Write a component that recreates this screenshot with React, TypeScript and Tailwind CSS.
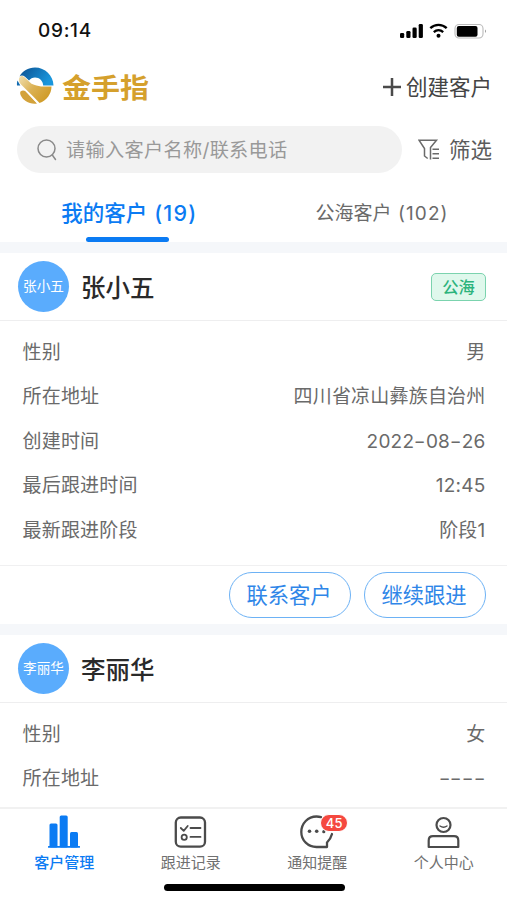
import React from "react";

function Logo() {
  return (
    <svg width="38" height="38" viewBox="0 0 38 38" className="shrink-0">
      <defs>
        <linearGradient id="blue" x1="0" y1="0" x2="1" y2="0.4">
          <stop offset="0" stopColor="#0b4f8f" />
          <stop offset="1" stopColor="#1a96dc" />
        </linearGradient>
        <linearGradient id="gold" x1="0" y1="0" x2="1" y2="0.7">
          <stop offset="0" stopColor="#f0dfb0" />
          <stop offset="0.5" stopColor="#dbb153" />
          <stop offset="1" stopColor="#cf9a25" />
        </linearGradient>
      </defs>
      <path d="M3.500 9.500C6.500 4 12 0.500 19 0.500C29 0.500 37.300 8.500 37.500 18.500H27.200C27 14 23.500 10.500 19 10.500C16.500 10.500 14.500 11.500 13 13.500L9 9.800C7 8 5 8 3.500 9.500Z" fill="url(#blue)" />
      <path d="M1.500 13.500L4.300 18.500H1C0.800 16.800 0.900 15 1.500 13.500Z" fill="#126bb0" />
      <path d="M3.500 10.500C5 8.300 7 8.800 9 10.800L15.500 16.800C19 18 22 19.300 25 19.500L35.500 19.500C35.500 27 30.500 33.500 23.500 36L17.500 29.800L5 17.500C2.800 15 2.300 12.500 3.500 10.500Z" fill="url(#gold)" />
      <path d="M4.500 24.500C7 22.800 9 23.500 11 25.800L21 36.500C14 37.800 7 33.500 4.800 28.500C4 26.800 4 25.500 4.500 24.500Z" fill="#d3a23a" />
      <path d="M10 23.800L22.500 36.800" stroke="#fff" strokeWidth="1.100" />
    </svg>
  );
}

function StatusBar() {
  return (
    <div className="flex h-[62px] shrink-0 items-center pl-[38px] pr-[20px]">
      <span className="pt-[1px] text-[19px] font-medium tracking-[0.700px] text-[#111]">09:14</span>
      <svg width="88" height="18" viewBox="0 0 88 18" className="ml-auto">
        <g fill="#000">
          <rect x="1" y="11" width="4.200" height="5" rx="1.300" />
          <rect x="7.300" y="9" width="4.200" height="7" rx="1.300" />
          <rect x="13.500" y="5.500" width="4.200" height="10.500" rx="1.300" />
          <rect x="19.700" y="2" width="4.200" height="14" rx="1.300" />
          <circle cx="39.500" cy="13.700" r="2" />
        </g>
        <path d="M31.300 6.200C36 1.800 43 1.800 47.700 6.200M34.800 10.100C37.600 7.600 41.400 7.600 44.200 10.100" fill="none" stroke="#000" strokeWidth="2.300" />
        <rect x="56" y="2.500" width="28" height="13.500" rx="4" fill="none" stroke="#bbb" strokeWidth="1.100" />
        <rect x="57.800" y="4" width="20.700" height="10.700" rx="2" fill="#000" />
        <path d="M86 7.500q2 1.700 0 3.500z" fill="#999" />
      </svg>
    </div>
  );
}

/* Hyphens are set on a digit-wide advance so dates and placeholders line up. */
function Value({ text }: { text: string }) {
  return (
    <span>
      {text.split("").map((ch, i) =>
        ch === "-" ? (
          <span key={i} className="inline-block w-[11.700px] scale-x-[1.350] text-center">{ch}</span>
        ) : (
          ch
        ),
      )}
    </span>
  );
}

function Row({ label, value }: { label: string; value: string }) {
  return (
    <div className="flex h-[44.500px] items-center justify-between pl-[22.500px] pr-[21.500px] text-[19px] leading-none tracking-[0.200px] text-[#6a6a6a]">
      <span>{label}</span>
      <Value text={value} />
    </div>
  );
}

function CustomerHead({ name, tag }: { name: string; tag?: string }) {
  return (
    <div className="flex h-[68px] shrink-0 items-center border-b border-[#eeeeef] pl-[18px] pr-[21px]">
      <div className="flex size-[51px] shrink-0 items-center justify-center rounded-full bg-[#5aacfd] pt-[1px] text-[13.600px] leading-none text-white">{name}</div>
      <span className="ml-[12px] pt-[3px] text-[24.500px] font-medium leading-none text-[#2a2a2a]">{name}</span>
      {tag && (
        <span className="ml-auto flex h-[28px] w-[55px] items-center justify-center rounded-[5px] border border-[#7bd3ae] bg-[#dff8ec] pt-[2px] text-[16.300px] font-medium leading-none text-[#2bb37c]">{tag}</span>
      )}
    </div>
  );
}

function BarsIcon() {
  return (
    <svg width="34" height="34" viewBox="0 0 34 34" fill="#0b7bf3">
      <rect x="2.500" y="8.500" width="8" height="24" rx="1.500" />
      <rect x="12.700" y="0.500" width="8" height="32" rx="1.500" />
      <rect x="23" y="17" width="8" height="15.500" rx="1.500" />
      <rect x="1" y="31" width="32" height="1.800" rx="0.500" />
    </svg>
  );
}

function ListIcon() {
  return (
    <svg width="34" height="34" viewBox="0 0 34 34" fill="none" stroke="#4b4b4b" strokeWidth="1.800" strokeLinecap="round" strokeLinejoin="round">
      <rect x="1.800" y="2.500" width="29.200" height="29.200" rx="5" strokeWidth="2.300" />
      <path d="M6.800 13L9.700 15.800L13.700 11M16.500 13H26.500M16.500 21.900H26.500" />
      <circle cx="10.200" cy="22.200" r="2.600" />
    </svg>
  );
}

function ChatIcon() {
  return (
    <svg width="34" height="34" viewBox="0 0 34 34" fill="none" stroke="#4b4b4b" strokeWidth="2.300" strokeLinejoin="round" strokeLinecap="round">
      <path d="M32 19C31 23 29.500 25 27 27.500V32H16.500C8 32 1.300 25.500 1.300 17C1.300 8.500 8 1.500 16.500 1.500C18.500 1.500 19.500 1.700 21 2.200" />
      <g fill="#4b4b4b" stroke="none">
        <circle cx="9.500" cy="16.200" r="1.800" />
        <circle cx="16.700" cy="16.200" r="1.800" />
        <circle cx="23.800" cy="16.700" r="1.600" />
      </g>
    </svg>
  );
}

function PersonIcon() {
  return (
    <svg width="34" height="34" viewBox="0 0 34 34" fill="none" stroke="#4b4b4b" strokeWidth="2.200" strokeLinejoin="round" strokeLinecap="round">
      <circle cx="16.500" cy="10" r="7" />
      <path d="M13 11Q16.500 13.500 20 11" strokeWidth="1.300" />
      <path d="M1.700 32V25.500Q1.700 21.200 6 21.200H27Q31.300 21.200 31.300 25.500V32Z" />
    </svg>
  );
}

function NavItem({ label, icon, active, badge }: { label: string; icon: React.ReactNode; active?: boolean; badge?: string }) {
  return (
    <div className={"flex w-[126.700px] flex-col items-center pt-[6px] " + (active ? "font-medium text-[#0b7bf3]" : "text-[#707070]")}>
      <div className="relative">
        {icon}
        {badge && (
          <span className="absolute left-[20px] top-[-1px] flex h-[18px] w-[28px] items-center justify-center rounded-full border border-white bg-[#f5483f] text-[13px] font-medium leading-none tracking-[0.300px] text-white">{badge}</span>
        )}
      </div>
      <span className="mt-[5px] text-[15px] leading-[18px]">{label}</span>
    </div>
  );
}

export default function App() {
  return (
    <div className="flex h-[900px] w-[507px] flex-col overflow-hidden bg-white font-[Inter,'Noto_Sans_CJK_SC',sans-serif] whitespace-nowrap">
      <StatusBar />
      <header className="flex h-[48px] shrink-0 items-center pl-[16px] pr-[15px]">
        <Logo />
        <span className="ml-[8px] scale-y-[0.930] pt-[4px] text-[29px] font-bold leading-none text-[#d5a02c]">金手指</span>
        <div className="ml-auto flex items-center text-[21.500px] leading-none text-[#444]">
          <svg width="18" height="18" viewBox="0 0 18 18" className="mr-[5px] mt-[2px]" stroke="#4a4a4a" strokeWidth="2.500">
            <path d="M0 9H18M9 0V18" />
          </svg>
          <span className="pt-[3px]">创建客户</span>
        </div>
      </header>
      <div className="flex shrink-0 items-center pl-[17px] pr-[15px] pt-[16px]">
        <div className="flex h-[47px] w-[385px] items-center rounded-full bg-[#f2f2f2] pl-[20px] text-[19.200px] leading-none tracking-[0.300px] text-[#999]">
          <svg width="20" height="22" viewBox="0 0 20 22" className="mr-[9px]" fill="none" stroke="#8a8a8a" strokeWidth="1.500" strokeLinecap="round">
            <circle cx="9.500" cy="9.500" r="8.500" />
            <path d="M15.300 16L18.500 20.500" />
          </svg>
          <span className="pt-[2px]">请输入客户名称/联系电话</span>
        </div>
        <div className="ml-auto flex items-center text-[21.500px] leading-none text-[#5c5c5c]">
          <svg width="22" height="21" viewBox="0 0 22 21" className="mr-[9px]" fill="none" stroke="#6a6a6a" strokeWidth="1.500">
            <path d="M9.700 19.500L6.500 17V9.500L1 1.200H18.500L12.500 8.500V20.500M14.500 10.200H21M14.500 14.700H21M14.500 19.200H21" />
          </svg>
          <span className="pt-[2px]">筛选</span>
        </div>
      </div>
      <nav className="flex h-[69px] shrink-0 leading-none">
        <div className="flex w-1/2 flex-col items-center pl-[1px] pt-[30px] text-[#0b7bf3]">
          <span className="h-[34px] pl-[4px] text-[21.500px] font-medium">
            我的客户<span className="tracking-[1.200px]"> (19)</span>
          </span>
          <span className="h-[5px] w-[83px] rounded-full bg-[#0b7bf3]" />
        </div>
        <div className="w-1/2 pl-[62px] pt-[31px] text-[19px] text-[#6a6a6a]">
          公海客户<span className="tracking-[1.100px]"> (102)</span>
        </div>
      </nav>
      <div className="h-[11px] shrink-0 bg-[#f5f7fa]" />
      <section className="shrink-0">
        <CustomerHead name="张小五" tag="公海" />
        <div className="h-[243.500px] pt-[9px]">
          <Row label="性别" value="男" />
          <Row label="所在地址" value="四川省凉山彝族自治州" />
          <Row label="创建时间" value="2022-08-26" />
          <Row label="最后跟进时间" value="12:45" />
          <Row label="最新跟进阶段" value="阶段1" />
        </div>
        <div className="flex h-[59.500px] justify-end gap-[13px] border-t border-[#f0f0f1] pr-[21px] pt-[6px] text-[21.300px] leading-none text-[#2f86e8]">
          <button className="h-[46px] w-[122px] rounded-full border-[1.500px] border-[#6db2f5] pr-[2px] pt-[2px]">联系客户</button>
          <button className="h-[46px] w-[122px] rounded-full border-[1.500px] border-[#6db2f5] pr-[2px] pt-[2px]">继续跟进</button>
        </div>
      </section>
      <div className="h-[11px] shrink-0 bg-[#f5f7fa]" />
      <section className="h-[172px] shrink-0 overflow-hidden">
        <CustomerHead name="李丽华" />
        <div className="pt-[9px]">
          <Row label="性别" value="女" />
          <Row label="所在地址" value="----" />
        </div>
      </section>
      <footer className="flex h-[93px] shrink-0 flex-col border-t-2 border-[#f1f1f1] bg-white pl-[1px]">
        <div className="flex h-[75px]">
          <NavItem label="客户管理" icon={<BarsIcon />} active />
          <NavItem label="跟进记录" icon={<ListIcon />} />
          <NavItem label="通知提醒" icon={<ChatIcon />} badge="45" />
          <NavItem label="个人中心" icon={<PersonIcon />} />
        </div>
        <div className="mx-auto h-[7px] w-[181px] rounded-full bg-black" />
      </footer>
    </div>
  );
}
